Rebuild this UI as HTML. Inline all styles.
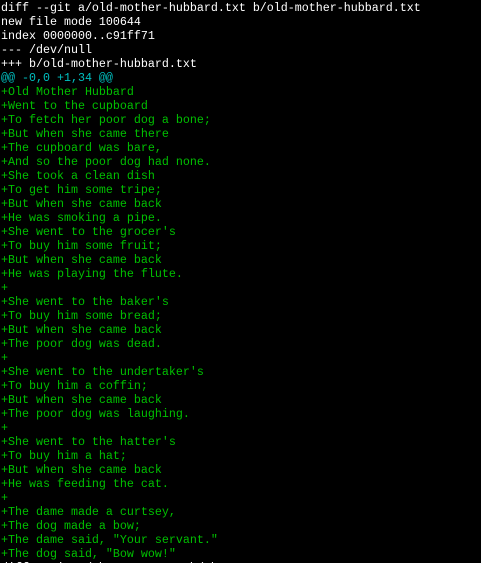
<!DOCTYPE html>
<html><head><meta charset="utf-8"><style>
html,body{margin:0;padding:0;background:#000;width:481px;height:563px;overflow:hidden}
pre{margin:0;padding:1px 0 0 1px;font-family:"Liberation Mono","DejaVu Sans Mono",monospace;font-size:11.67px;line-height:14px;color:#fff;white-space:pre}
.g{color:#00c000}.c{color:#00c0c0}
</style></head><body><pre>diff --git a/old-mother-hubbard.txt b/old-mother-hubbard.txt
new file mode 100644
index 0000000..c91ff71
--- /dev/null
+++ b/old-mother-hubbard.txt
<span class="c">@@ -0,0 +1,34 @@</span>
<span class="g">+Old Mother Hubbard
+Went to the cupboard
+To fetch her poor dog a bone;
+But when she came there
+The cupboard was bare,
+And so the poor dog had none.
+She took a clean dish
+To get him some tripe;
+But when she came back
+He was smoking a pipe.
+She went to the grocer's
+To buy him some fruit;
+But when she came back
+He was playing the flute.
+
+She went to the baker's
+To buy him some bread;
+But when she came back
+The poor dog was dead.
+
+She went to the undertaker's
+To buy him a coffin;
+But when she came back
+The poor dog was laughing.
+
+She went to the hatter's
+To buy him a hat;
+But when she came back
+He was feeding the cat.
+
+The dame made a curtsey,
+The dog made a bow;
+The dame said, "Your servant."
+The dog said, "Bow wow!"</span>
diff --git a/the-raven.txt b/the-raven.txt</pre></body></html>
